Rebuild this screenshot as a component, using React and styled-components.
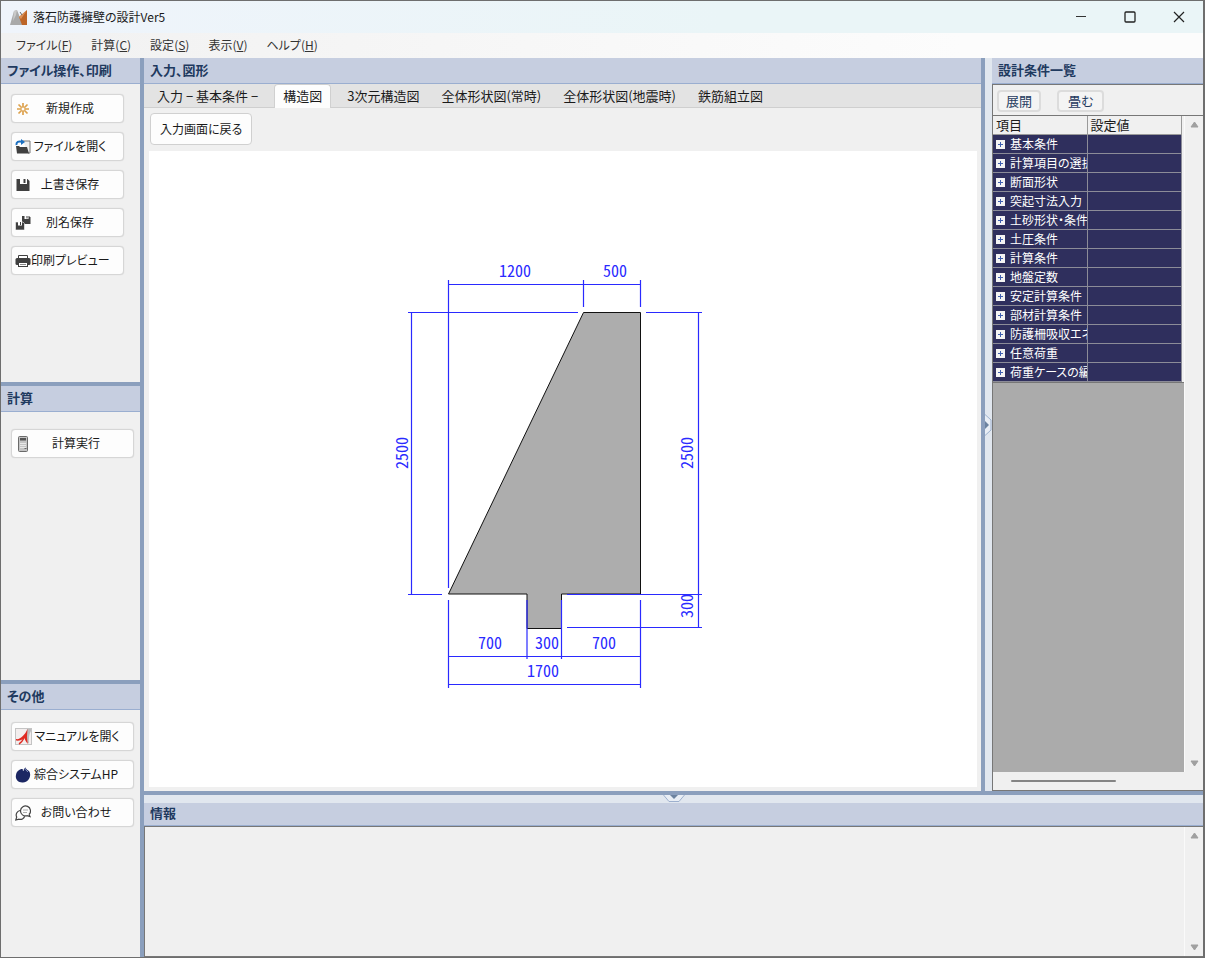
import React, { useState } from "react";
import styled, { createGlobalStyle } from "styled-components";

////////////////////////////////////////////////////////////////////////

const GlobalStyle = createGlobalStyle`
  * {
    box-sizing: border-box;
  }
  body {
    margin: 0;
    font-family: "Noto Sans CJK JP", sans-serif;
    font-size: 13px;
    font-feature-settings: "palt";
    color: #1a1a1a;
  }
  button {
    font: inherit;
    font-feature-settings: inherit;
    color: inherit;
    padding: 0;
    border: none;
    background: none;
    white-space: nowrap;
  }
  svg {
    display: block;
    flex: none;
  }
`;

const Window = styled.div`
  display: flex;
  flex-direction: column;
  height: 100vh;
  min-height: 800px;
  border: 1px solid #6e6e6e;
  border-right: 2px solid #6e6e6e;
  background: #f0f0f0;
`;

const TitleBar = styled.header`
  display: flex;
  align-items: center;
  height: 32px;
  padding-left: 9px;
  background: linear-gradient(90deg, #eff4fb, #eaf5f7 60%);
`;

const Title = styled.h1`
  flex: 1;
  margin: 0;
  padding: 0 0 2px 5px;
  font-size: 12px;
  font-weight: 400;
`;

const WindowButton = styled.button`
  display: flex;
  align-items: center;
  justify-content: center;
  width: 49px;
  height: 32px;
`;

const MenuBar = styled.nav`
  display: flex;
  align-items: center;
  gap: 19px;
  height: 25px;
  padding: 0 0 2px 15px;
  background: linear-gradient(90deg, #f1f1f1, #fcfcfc 80%);
`;

const MenuItem = styled.button`
  color: #333;
  font-size: 12px;
  line-height: 20px;
`;

const Body = styled.div`
  display: flex;
  flex: 1;
  min-height: 0;
`;

const Sidebar = styled.aside`
  display: flex;
  flex-direction: column;
  width: 143px;
  border-right: 4px solid #8b9fbd;
`;

const Section = styled.section`
  flex: ${({ $grow }) => $grow} 0 0;

  & + & {
    border-top: 4px solid #8b9fbd;
  }
`;

const PanelTitle = styled.h2`
  margin: 0;
  height: ${({ $low }) => ($low ? 23 : 26)}px;
  flex: none;
  padding-left: 6px;
  border-bottom: 1px solid #9aaed0;
  background: #c6cee0;
  color: #1f3a5f;
  font-size: 13px;
  font-weight: 700;
  line-height: ${({ $low }) => ($low ? 20 : 23)}px;
`;

const ButtonList = styled.div`
  display: flex;
  flex-direction: column;
  gap: 9px;
  padding: ${({ $top }) => $top}px 6px 0 10px;
`;

const SideButton = styled.button`
  display: flex;
  align-items: center;
  height: 29px;
  width: ${({ $narrow }) => ($narrow ? "113px" : "100%")};
  padding: 0 ${({ $narrow }) => ($narrow ? 14 : 12)}px 0 3px;
  border: 1px solid #d6d6d6;
  border-radius: 4px;
  background: #fdfdfd;
  box-shadow: 0 0 1px #ccc;
`;

const ButtonLabel = styled.span`
  flex: 1;
  padding-bottom: 2px;
  font-size: 12px;
  text-align: center;
`;

const Workspace = styled.div`
  display: flex;
  flex-direction: column;
  flex: 1;
  min-width: 0;
`;

const Upper = styled.div`
  display: flex;
  flex: 1;
  min-height: 0;
  border-bottom: 4px solid #8b9fbd;
`;

const MainPanel = styled.main`
  display: flex;
  flex-direction: column;
  flex: 1;
  min-width: 0;
  border-right: 4px solid #8b9fbd;
`;

const TabStrip = styled.div`
  display: flex;
  height: 24px;
  flex: none;
  padding-left: 2px;
  border-bottom: 1px solid #cfcfcf;
  background: #e3e3e3;
`;

const Tab = styled.button`
  height: ${({ $active }) => ($active ? 24 : 23)}px;
  padding: ${({ $active }) => ($active ? "0 8px 2px" : "0 11px")};
  margin: 0 ${({ $active }) => ($active ? 5 : 0)}px;
  border: ${({ $active }) => ($active ? "1px solid #d0d0d0" : "none")};
  border-bottom: none;
  border-radius: 4px 4px 0 0;
  background: ${({ $active }) => ($active ? "#fdfdfd" : "none")};
  line-height: 20px;
`;

const Toolbar = styled.div`
  padding: 5px 6px 6px;
`;

const BackButton = styled.button`
  height: 32px;
  padding: 0 9px 2px;
  border: 1px solid #d0d0d0;
  border-radius: 4px;
  background: #fdfdfd;
  font-size: 12px;
`;

const Canvas = styled.div`
  flex: 1;
  min-height: 0;
  margin: 0 4px 4px 5px;
  background: #fff;

  svg {
    width: 100%;
    height: 100%;
  }
`;

const DimensionText = styled.text`
  fill: #2a2aff;
  font-size: 16px;
  font-feature-settings: "hwid";
  text-anchor: middle;
`;

const SideSplitter = styled.div`
  display: flex;
  align-items: center;
  width: 7px;
  background: #e1e7ef;
`;

const BottomSplitter = styled.div`
  display: flex;
  justify-content: center;
  height: 8px;
  background: #e1e7ef;
`;

const ConditionPanel = styled.aside`
  display: flex;
  flex-direction: column;
  width: 211px;
`;

const ConditionTools = styled.div`
  display: flex;
  align-items: center;
  gap: 16px;
  height: 32px;
  flex: none;
  padding: 1px 0 0 4px;
  border: 1px solid #777;
  border-right: none;
`;

const SmallButton = styled.button`
  height: 22px;
  padding: 0 ${({ $pad }) => $pad}px;
  border: 2px solid #dcdcdc;
  border-radius: 4px;
  background: #f4f4f4;
  color: #1f3a5f;
  line-height: 16px;
`;

const GridArea = styled.div`
  display: grid;
  grid-template-columns: 1fr 19px;
  grid-template-rows: 1fr 18px;
  flex: 1;
  min-height: 0;
  border-left: 1px solid #777;
  border-bottom: 1px solid #777;
`;

const GridBack = styled.div`
  min-height: 0;
  overflow: hidden;
  background: #ababab;
`;

const TableFrame = styled.div`
  padding-right: 2px;
  border-bottom: 1px solid #777;
  background: #f0f0f0;
`;

const ConditionTable = styled.table`
  width: 100%;
  table-layout: fixed;
  border-collapse: separate;
  border-spacing: 0;
`;

const HeadCell = styled.th`
  height: 19px;
  padding: 0 0 0 3px;
  border-right: 1px solid #9a9a9a;
  border-bottom: 1px solid #9a9a9a;
  background: #f0f0f0;
  font-weight: 400;
  text-align: left;
  line-height: 18px;
`;

const RowCell = styled.td`
  height: 19px;
  padding: 0;
  border-right: 1px solid #8c8c98;
  border-bottom: 1px solid #8c8c98;
  background: #2f2f5d;
  color: #fff;
  font-size: 12px;
  line-height: 18px;
  overflow: hidden;
`;

const RowName = styled.div`
  display: flex;
  align-items: center;
  gap: 5px;
  height: 18px;
  padding-left: 3px;
  overflow: hidden;
  white-space: nowrap;
`;

const Expander = styled.button`
  display: flex;
  flex: none;
`;

const VerticalBar = styled.div`
  display: flex;
  flex-direction: column;
  justify-content: space-between;
  align-items: center;
  width: 19px;
  padding: 5px 0;
  border-left: 1px solid #fafafa;
`;

const HorizontalBar = styled.div`
  display: flex;
  align-items: center;
  grid-column: 1 / -1;
  padding-left: 18px;
`;

const Thumb = styled.div`
  width: 105px;
  height: 2px;
  border-radius: 1px;
  background: #858585;
`;

const InfoPanel = styled.section`
  display: flex;
  flex-direction: column;
`;

const InfoBox = styled.div`
  display: flex;
  justify-content: flex-end;
  height: 131px;
  border: 1px solid #777;
  border-right: none;
`;

////////////////////////////////////////////////////////////////////////

const AppIcon = () => (
  <svg width="18" height="17" viewBox="0 0 18 17">
    <path d="M0 16 L4 2 L7 1 L13 16 Z" fill="#a9a9a9" />
    <path d="M4 2 L7 1 L6 6 L3 12 Z" fill="#c9c9c9" />
    <path d="M17 1 V16 H12 L9 8 Z" fill="#bd6527" />
    <path d="M17 1 L9 8 L11 10 Z" fill="#dc9158" />
    <path d="M10 3 L12 6" stroke="#666" />
  </svg>
);

const NewIcon = () => (
  <svg width="16" height="16" viewBox="0 0 16 16" fill="none" stroke="#dda24e" strokeWidth="1.7">
    <path d="M8 2V6M8 10V14M2 8H6M10 8H14M3.500 3.500L6.500 6.500M9.500 9.500L12.500 12.500M12.500 3.500L9.500 6.500M6.500 9.500L3.500 12.500" />
    <circle cx="8" cy="8" r="2" strokeWidth="1" />
  </svg>
);

const OpenIcon = () => (
  <svg width="16" height="16" viewBox="0 0 16 16">
    <path d="M8 2H15V14H13" fill="#eee" stroke="#777" />
    <path d="M1 7H4L5 8H12L14 14.500H2Z" fill="#404040" />
    <path d="M1.500 6C1 3 3.500 1.800 7 2.800" fill="none" stroke="#1a6fc0" strokeWidth="2" />
    <path d="M6 0L10 3L6 6Z" fill="#1a6fc0" />
  </svg>
);

const SaveIcon = () => (
  <svg width="16" height="16" viewBox="0 0 16 16">
    <path d="M1.500 2H12.500L14.500 4V14H1.500Z" fill="#404040" />
    <path d="M5 2H12V7H5Z" fill="#fff" />
    <path d="M8.500 2H10.500V6H8.500Z" fill="#404040" />
  </svg>
);

const SaveAsIcon = () => (
  <svg width="16" height="16" viewBox="0 0 16 16">
    <path d="M7 1H14L15.500 2.500V9H7Z" fill="#404040" />
    <path d="M9.500 1H13.500V4H9.500Z" fill="#fff" />
    <path d="M11.500 1H12.500V3.500H11.500Z" fill="#404040" />
    <path d="M0.500 7H8L9.500 8.500V15H0.500Z" fill="#404040" stroke="#fdfdfd" strokeWidth="0.600" />
    <path d="M3 7H7V10.500H3Z" fill="#fff" />
    <path d="M5 7H6V10H5Z" fill="#404040" />
  </svg>
);

const PrintIcon = () => (
  <svg width="16" height="16" viewBox="0 0 16 16">
    <path d="M3.500 6V2.500H12.500V6" fill="#fff" stroke="#404040" />
    <rect x="0.500" y="5" width="15" height="7" rx="1.500" fill="#404040" />
    <rect x="3.500" y="9.500" width="9" height="4" fill="#fff" stroke="#404040" />
    <path d="M5 11.500H11" stroke="#888" />
  </svg>
);

const CalcIcon = () => (
  <svg width="16" height="16" viewBox="0 0 16 16">
    <rect x="3.500" y="0.500" width="9" height="15" rx="1" fill="#c4c4c4" stroke="#6a6a6a" />
    <rect x="5" y="2" width="6" height="2.500" fill="#555" />
    <path d="M5 7.500H11M5 9.500H11M5 11.500H11" stroke="#e8e8e8" />
    <path d="M9.500 12.500H11.500" stroke="#666" />
  </svg>
);

const ManualIcon = () => (
  <svg width="18" height="17" viewBox="0 0 18 17">
    <rect x="0.500" y="0.500" width="16" height="16" fill="#f3eeee" stroke="#c4c4c4" />
    <path d="M12 1H16V3C14 6 13.500 11 14 16L11 12Z" fill="#bdbdbd" />
    <path d="M1 11C5 12 10 7 12.500 1L12 8C12 11 12.500 14 13 16C11 14 10 12 9.500 10C7 12 4 13 1 12.500Z" fill="#e02a22" />
    <path d="M4 16C6 15 8 12 9 10" fill="none" stroke="#e02a22" strokeWidth="1.500" />
  </svg>
);

const HomeIcon = () => (
  <svg width="16" height="16" viewBox="0 0 16 16">
    <path d="M9 4C8 2 10 1 11 0.500C10.500 2 12 3 14 4C17 8 14 15 8 15.500C3 16 0 12 1 8C1.500 4 5 1.500 8 2C7 3 8 4 9 4Z" fill="#1c2763" />
    <path d="M10 1C9.500 3 12 3.500 13 5" fill="none" stroke="#8a94bd" />
  </svg>
);

const ContactIcon = () => (
  <svg width="16" height="16" viewBox="0 0 16 16" fill="none" stroke="#444" strokeWidth="1.200">
    <path d="M14 9.500L15 11.500L12 10.700A5 5 0 1 1 14 9.500" />
    <path d="M5 5.500A4.500 4.500 0 0 0 1.700 12L0.800 15L4 14.200A4.500 4.500 0 0 0 9.700 11.300" />
    <path d="M8 5H13M8 7.500H12" stroke="#999" strokeWidth="0.800" />
  </svg>
);

const PlusIcon = () => (
  <svg width="9" height="9" viewBox="0 0 9 9">
    <rect width="9" height="9" fill="#f4f4f4" />
    <path d="M2 4.500H7M4.500 2V7" stroke="#3f5fb0" />
  </svg>
);

const Arrow = ({ down }) => (
  <svg width="9" height="7" viewBox="0 0 9 7">
    <path
      d={down ? "M1 1H8L4.500 6Z" : "M1 6H8L4.500 1Z"}
      fill="#a0a0a0"
      stroke="#a0a0a0"
      strokeLinejoin="round"
    />
  </svg>
);

const ScrollBar = () => (
  <VerticalBar>
    <button aria-label="上へ">
      <Arrow />
    </button>
    <button aria-label="下へ">
      <Arrow down />
    </button>
  </VerticalBar>
);

////////////////////////////////////////////////////////////////////////

const menus = [
  ["ファイル", "F"],
  ["計算", "C"],
  ["設定", "S"],
  ["表示", "V"],
  ["ヘルプ", "H"],
];

const sections = [
  {
    title: "ファイル操作、印刷",
    grow: 324,
    top: 10,
    narrow: true,
    buttons: [
      ["新規作成", NewIcon],
      ["ファイルを開く", OpenIcon],
      ["上書き保存", SaveIcon],
      ["別名保存", SaveAsIcon],
      ["印刷プレビュー", PrintIcon],
    ],
  },
  { title: "計算", grow: 294, top: 17, buttons: [["計算実行", CalcIcon]] },
  {
    title: "その他",
    grow: 273,
    top: 12,
    buttons: [
      ["マニュアルを開く", ManualIcon],
      ["綜合システムHP", HomeIcon],
      ["お問い合わせ", ContactIcon],
    ],
  },
];

const tabs = [
  "入力 − 基本条件 −",
  "構造図",
  "3次元構造図",
  "全体形状図(常時)",
  "全体形状図(地震時)",
  "鉄筋組立図",
];

const conditions = [
  "基本条件",
  "計算項目の選択",
  "断面形状",
  "突起寸法入力",
  "土砂形状・条件",
  "土圧条件",
  "計算条件",
  "地盤定数",
  "安定計算条件",
  "部材計算条件",
  "防護柵吸収エネルギー",
  "任意荷重",
  "荷重ケースの編集",
];

// [text, x, baseline, vertical]
const dimensions = [
  ["1200", 515, 277],
  ["500", 615, 277],
  ["700", 490, 649],
  ["300", 547, 649],
  ["700", 604, 649],
  ["1700", 543, 677],
  ["2500", 408, 453, true],
  ["2500", 693, 453, true],
  ["300", 693, 606, true],
];

const Drawing = () => (
  <svg viewBox="149 151 828 636" role="img" aria-label="構造図">
    <path
      d="M448.500 594L583.500 312.500H640.500V594H561.500V628.500H527V594Z"
      fill="#adadad"
      stroke="#111"
    />
    <g stroke="#2a2aff" fill="none" strokeWidth="1.200">
      <path d="M448 284.500H640M448.500 280V588M583.500 280V307M640.500 280V307" />
      <path d="M408 312.500H578M408 594.500H442M411.500 312V594" />
      <path d="M646 312.500H702M567 594.500H702M567 627.500H702M698.500 312V628" />
      <path d="M448.500 600V688M640.500 600V688M527 600V659M561.500 600V659" />
      <path d="M448 656.500H640M448 684.500H640" />
    </g>
    {dimensions.map(([text, x, y, vertical], i) => (
      <DimensionText
        key={i}
        x={x}
        y={y}
        transform={vertical ? `rotate(-90 ${x} ${y})` : undefined}
      >
        {text}
      </DimensionText>
    ))}
  </svg>
);

const App = () => {
  const [active, setActive] = useState(1);

  return (
    <Window>
      <GlobalStyle />
      <TitleBar>
        <AppIcon />
        <Title>落石防護擁壁の設計Ver5</Title>
        <WindowButton aria-label="最小化">
          <svg width="12" height="12" viewBox="0 0 12 12" stroke="#333">
            <path d="M1 5.500H11" />
          </svg>
        </WindowButton>
        <WindowButton aria-label="最大化">
          <svg width="12" height="12" viewBox="0 0 12 12" stroke="#222" fill="none">
            <rect x="1" y="1" width="10" height="10" rx="1" strokeWidth="1.300" />
          </svg>
        </WindowButton>
        <WindowButton aria-label="閉じる">
          <svg width="12" height="12" viewBox="0 0 12 12" stroke="#222" strokeWidth="1.200">
            <path d="M1 1L11 11M11 1L1 11" />
          </svg>
        </WindowButton>
      </TitleBar>
      <MenuBar>
        {menus.map(([name, letter]) => (
          <MenuItem key={name}>
            {name}(<u>{letter}</u>)
          </MenuItem>
        ))}
      </MenuBar>
      <Body>
        <Sidebar>
          {sections.map(({ title, grow, top, narrow, buttons }) => (
            <Section key={title} $grow={grow}>
              <PanelTitle>{title}</PanelTitle>
              <ButtonList $top={top}>
                {buttons.map(([label, Icon]) => (
                  <SideButton key={label} $narrow={narrow}>
                    <Icon />
                    <ButtonLabel>{label}</ButtonLabel>
                  </SideButton>
                ))}
              </ButtonList>
            </Section>
          ))}
        </Sidebar>
        <Workspace>
          <Upper>
            <MainPanel>
              <PanelTitle>入力、図形</PanelTitle>
              <TabStrip role="tablist">
                {tabs.map((name, i) => (
                  <Tab
                    key={name}
                    role="tab"
                    aria-selected={i === active}
                    $active={i === active}
                    onClick={() => setActive(i)}
                  >
                    {name}
                  </Tab>
                ))}
              </TabStrip>
              <Toolbar>
                <BackButton>入力画面に戻る</BackButton>
              </Toolbar>
              <Canvas>
                <Drawing />
              </Canvas>
            </MainPanel>
            <SideSplitter>
              <button aria-label="一覧を隠す">
                <svg width="7" height="22" viewBox="0 0 7 22">
                  <path d="M0 0.500L6 6V16L0 21.500" fill="#e9eef5" stroke="#9db0ce" />
                  <path d="M0 7L4 11L0 15Z" fill="#6d83a0" />
                </svg>
              </button>
            </SideSplitter>
            <ConditionPanel>
              <PanelTitle>設計条件一覧</PanelTitle>
              <ConditionTools>
                <SmallButton $pad={7}>展開</SmallButton>
                <SmallButton $pad={9}>畳む</SmallButton>
              </ConditionTools>
              <GridArea>
                <GridBack>
                  <TableFrame>
                    <ConditionTable>
                      <thead>
                        <tr>
                          <HeadCell>項目</HeadCell>
                          <HeadCell>設定値</HeadCell>
                        </tr>
                      </thead>
                      <tbody>
                        {conditions.map((name) => (
                          <tr key={name}>
                            <RowCell>
                              <RowName>
                                <Expander aria-label={`${name}を展開`}>
                                  <PlusIcon />
                                </Expander>
                                {name}
                              </RowName>
                            </RowCell>
                            <RowCell />
                          </tr>
                        ))}
                      </tbody>
                    </ConditionTable>
                  </TableFrame>
                </GridBack>
                <ScrollBar />
                <HorizontalBar>
                  <Thumb />
                </HorizontalBar>
              </GridArea>
            </ConditionPanel>
          </Upper>
          <BottomSplitter>
            <button aria-label="情報を隠す">
              <svg width="22" height="8" viewBox="0 0 22 8">
                <path d="M0.500 0L6 6.500H16L21.500 0" fill="#e9eef5" stroke="#9db0ce" />
                <path d="M7 0H15L11 4Z" fill="#6d83a0" />
              </svg>
            </button>
          </BottomSplitter>
          <InfoPanel>
            <PanelTitle $low>情報</PanelTitle>
            <InfoBox>
              <ScrollBar />
            </InfoBox>
          </InfoPanel>
        </Workspace>
      </Body>
    </Window>
  );
};

export default App;
